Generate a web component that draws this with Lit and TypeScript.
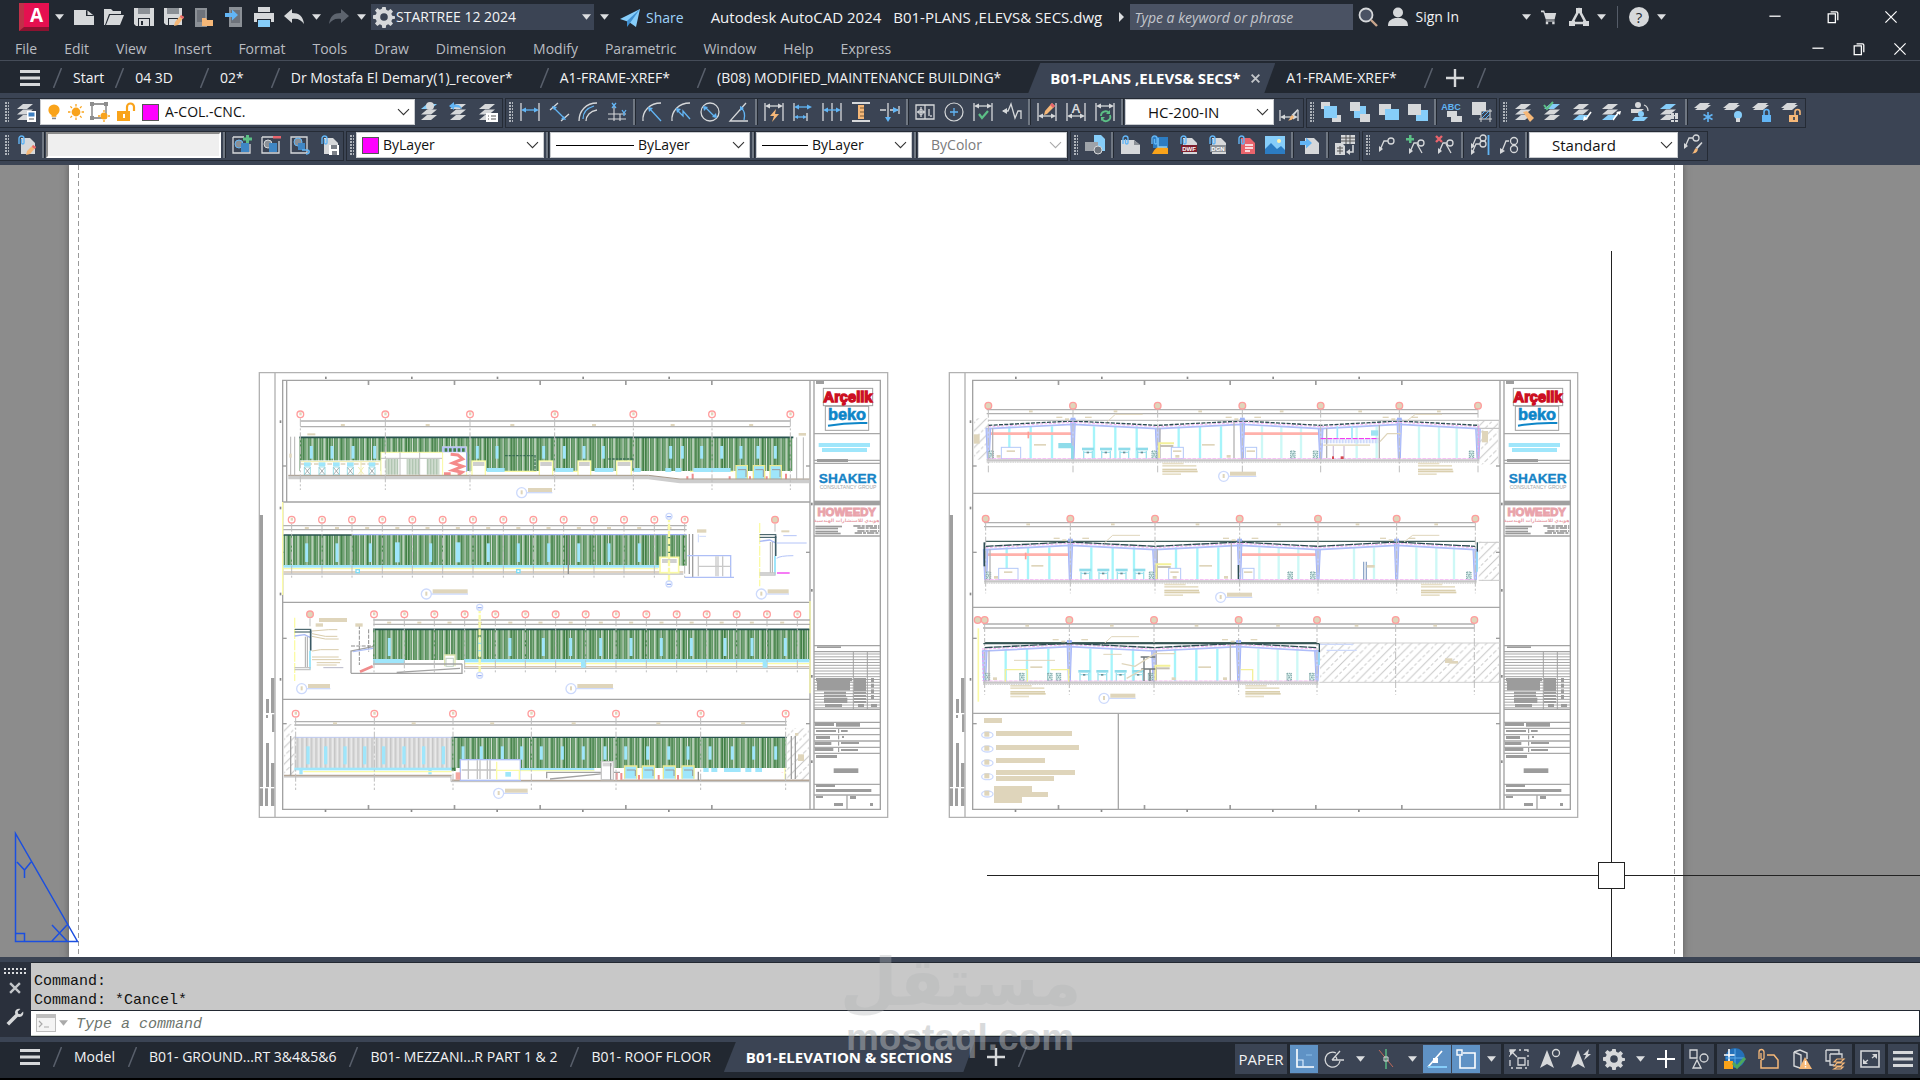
import { LitElement, html, css, svg } from "lit";
import { customElement } from "lit/decorators.js";

/* ---------- palette for icon strokes ---------- */
const G = "#d6d8da";
const B = "#62b5f5";
const LB = "#86cdf9";
const GR = "#5cbf86";
const OR = "#f9a31a";
const PE = "#f6b878";
const RD = "#e8646c";

/* ---------- icon primitives (20 x 20 box) ---------- */
const f = (d: string, c = G) => svg`<path d=${d} fill=${c}></path>`;
const s = (d: string, c = G, w = 1.3) => svg`<path d=${d} fill="none" stroke=${c} stroke-width=${w}></path>`;
const layer = (x: number, y: number, c = G) => f(`M${x + 6} ${y}h10l-6 5h-10z`, c);
const stack = (a = G, b = G, c = G) => [layer(1, 13, c), layer(1, 7.5, b), layer(1, 2, a)];
const page = (c = G) => f("M5 3h9l5 5v11H5z", c);
const clip = s("M3 9V3.500a2 2 0 0 1 5 0V8a1.300 1.300 0 0 1-2.500 0V4", B, 1.4);
const brush = [f("M18.500 7l1 1-5 6-2-1z", G), f("M13 13l2 1.500c-1 3-3 4-6 4 2-1 2-4 4-5.500z", PE)];
const posts = s("M1 1v18M19 1v18");
const arrowsH = (y: number, c = B) => [s(`M3 ${y}h14`, c), f(`M1 ${y}l5-2.500v5zM19 ${y}l-5-2.500v5z`, c)];
const leader = (x: number, y: number) => [s(`M${x} ${y + 12}l4-9h4`), f(`M${x - 1} ${y + 14}l0-6 4 3z`), svg`<circle cx=${x + 11} cy=${y + 3} r="3" fill="none" stroke=${G} stroke-width="1.300"></circle>`];
const docBadge = (c: string, t: string) => [page(G), f("M3 10h16v7H3z", c), svg`<text x="11" y="16" font-size="6" font-weight="700" text-anchor="middle" fill="#fff" font-family="Liberation Sans, sans-serif">${t}</text>`, clip];

const ICONS: Record<string, unknown> = {
  menu: f("M0 2h20v3H0zM0 8.500h20v3H0zM0 15h20v3H0z"),
  plus: f("M8.800 1h2.400v7.800H19v2.400h-7.800V19H8.800v-7.800H1V8.800h7.800z"),
  close: s("M3 3l14 14M17 3L3 17", "#c3c6ca", 3.4),
  new: [f("M0 3h12l8 6v9H0z"), f("M12 3v6h8z", "#222831"), f("M13.500 3.500l5.500 4.500h-5.500z")],
  open: [f("M0 2h7l2 2h8v3H5L1 18H0z"), f("M6 8h14l-4 10H2z")],
  save: [f("M0 1h20v18H2l-2-2z"), f("M4 1h12v6H4z", "#8b9096"), f("M4 11h12v8H4z", "#222831"), f("M5 12h10v7H5z"), f("M7 14h2v4H7z", "#222831")],
  saveas: [f("M0 1h18v17H2l-2-2z"), f("M3 1h12v6H3z", "#8b9096"), f("M4 11h10v7H4z", "#222831"), f("M5 12h8v6H5z"), f("M17 8l3 2-6 8-4 1 1-4z", PE), f("M17 8l3 2-1 2-3-2z", RD)],
  openweb: [f("M1 1h12v19H1z", "#8b9096"), f("M3 3h8v12H3z", "#6e737b"), f("M8 11h4l1 2h6v6H8z", PE)],
  saveweb: [f("M5 0h13v20H5z", "#8b9096"), f("M7 3h9v13H7z", "#6e737b"), f("M1 6h7V2.500l6 5.500-6 5.500V10H1z", B)],
  print: [f("M4 0h12v5H4z"), f("M0 6h20v9H0z"), f("M3 12h14v8H3z", "#222831"), f("M4 13h12v7H4z", LB)],
  undo: f("M0 9l8-7v4c7 0 11 3 12 11-3-4-6-6-12-5v4z"),
  redo: f("M20 9l-8-7v4C5 6 1 9 0 17c3-4 6-6 12-5v4z", "#5d646e"),
  gear: [f("M8.300 0h3.400l.5 2.800 2 .9L16.600 2 19 4.400l-1.700 2.400.9 2 2.800.5v2.400l-2.800.5-.9 2 1.700 2.400-2.400 2.400-2.400-1.700-2 .9-.5 2.800H8.300l-.5-2.800-2-.9L3.400 19 1 16.600l1.700-2.400-.9-2L-1 11.700V8.300l2.800-.5.9-2L1 3.400 3.400 1l2.400 1.700 2-.9z"), svg`<circle cx="10" cy="10" r="3.800" fill="#3b4454"></circle>`],
  share: [f("M0 11L20 1l-4 18-7-5z", LB), f("M20 1L7 13v6l3-4z", "#3f8fd0")],
  search: [svg`<circle cx="8" cy="8" r="6.500" fill="#4a5263" stroke=${G} stroke-width="1.800"></circle>`, s("M13 13l6 6", "#c9a68c", 2.4)],
  user: [svg`<circle cx="10" cy="5.500" r="5" fill=${G}></circle>`, f("M0 19c0-6 4-7 7-8h6c3 1 7 2 7 8z")],
  cart: [f("M0 2h4l1 3h14l-2 8H6L3 4H0z"), s("M6 15h11"), f("M6 16h3v3H6zM14 16h3v3h-3z")],
  apps: [s("M10 3L3 16h14z", G, 2.6), f("M7 1h6v5H7zM0 14h6v5H0zM14 14h6v5h-6z")],
  help: [svg`<circle cx="10" cy="10" r="10" fill=${G}></circle>`, svg`<text x="10" y="15.500" font-size="15" text-anchor="middle" fill="#222831" font-family="Open Sans, sans-serif">?</text>`],
  min: s("M3 9h14", "#fff", 1.6),
  restore: s("M4 6h9v11H4zM7 3.500h7.500q1.500 0 1.500 1.500v9", "#fff", 1.6),
  x: s("M3 3l14 14M17 3L3 17", "#fff", 1.5),
  props: [...stack(), f("M11 9h9v11h-9z", "#fff"), f("M12.500 10.500h6v4h-6z", "#3c7ec0"), s("M13 17h5", "#555", 1)],
  bulb: [svg`<circle cx="10" cy="7.500" r="7" fill=${OR}></circle>`, f("M7 13h6v3H7z", OR), f("M7.500 17h5v2h-5z", "#8a8a8a")],
  sun: [svg`<circle cx="10" cy="10" r="5.500" fill=${OR}></circle>`, s("M10 0v3M10 17v3M0 10h3M17 10h3M3 3l2 2M15 15l2 2M17 3l-2 2M5 15l-2 2", OR, 1.6)],
  vpfreeze: [s("M2 2h14v14H2z", "#777"), f("M0 0h4v4H0zM14 0h4v4h-4zM0 14h4v4H0z", "#8d8d8d"), svg`<circle cx="14" cy="14" r="3.500" fill=${OR}></circle>`, s("M14 8v2M14 18v2M8 14h2M18 14h2", OR)],
  unlock: [f("M1 9h13v10H1z", OR), s("M11 9V5a3.500 3.500 0 0 1 7 0v4", OR, 2.2), f("M7 12h2v4H7z", "#fff")],
  laycur: [...stack(LB), svg`<circle cx="10" cy="4" r="4" fill=${G}></circle>`],
  layprev: [...stack(), f("M0 4l5-4v2.500c5 0 7 1 8 5-2-2-4-2.500-8-2V8z", B)],
  laystate: [...stack(), f("M8 11h12v9H8z", "#fff"), s("M10 14h1M13 14h5M10 17h1M13 17h5", "#555", 1)],
  dlinear: [posts, arrowsH(8)],
  daligned: [s("M1 8l8-7M12 19l8-7"), s("M5 6l10 10", B), f("M3 4l5 1-3 3zM17 18l-5-1 3-3z", B)],
  darc: [s("M1 19C1 9 8 1 19 1M8 19c0-5 4-10 11-11"), s("M5 17C5 11 9 6 16 4", B)],
  dord: [s("M7 2v17M1 12h18M1 17h18M13 12v7", G, 1.1), s("M5 1l4 5M9 1L5 6M15 8l2 3 2-3M17 11v3", B)],
  drad: [s("M1 19C0 9 8 1 19 1"), s("M8 7l11 12", B), f("M6 5l5 1-4 4z", B)],
  djog: [s("M1 19C0 9 8 1 19 1"), s("M6 8l6 6v-5l7 8", B), f("M5 6l5 1-4 4z", B)],
  ddia: [svg`<circle cx="10" cy="10" r="9" fill="none" stroke=${G} stroke-width="1.300"></circle>`, s("M5 5l10 10", B), f("M3 4l5 1-4 4zM17 16l-5-1 4-4z", B)],
  dang: [s("M17 1L1 19h18"), s("M12 6c4 3 4 8 3 12", B), f("M11 4l4 2-4 3z", B)],
  dquick: [posts, arrowsH(4, G), f("M12 7l-6 7h4l-2 6 7-8h-4z", PE)],
  dbase: [s("M1 1v18"), arrowsH(5), s("M3 15h9", B), f("M1 15l4-2v4zM14 15l-4-2v4z", B), s("M14 11v8")],
  dcont: [s("M1 1v18M10 1v18M19 1v18"), arrowsH(8)],
  dspace: [s("M1 1h18M1 19h18", G, 2), f("M7 3h6v14H7z", PE), s("M9 6h4M9 10h4M9 14h4", "#7b5b35", 1)],
  dbreak: [s("M8 1v17M0 8h6M10 8h8M19 4v8"), f("M19 8l-6-3v6zM8 20l-3-5h6z", B)],
  dtol: [s("M1 3h18v14H1zM10 3v14"), s("M6 5v10M2 10h8", G), svg`<circle cx="6" cy="10" r="2.500" fill="none" stroke=${G}></circle>`, s("M14 7v7M16 13v2", G)],
  dcenter: [svg`<circle cx="10" cy="10" r="9" fill="none" stroke=${G} stroke-width="1.200"></circle>`, s("M10 6v8M6 10h8", B)],
  dinspect: [posts, arrowsH(4, G), s("M6 12l3 4 6-7", GR, 2.2)],
  djogline: [s("M1 9h5l3-7 4 14 3-7h3v8"), f("M0 9l5-3v6z")],
  dedit: [posts, arrowsH(14, G), f("M15 1l3 3-8 8-3 1 1-4z", PE), f("M15 1l3 3-2 2-3-3z", RD)],
  dtedit: [posts, arrowsH(14, G), svg`<text x="10" y="11" font-size="13" font-weight="700" text-anchor="middle" fill=${G} font-family="Liberation Sans, sans-serif">A</text>`],
  dupdate: [posts, arrowsH(4, G), s("M6 14a4.500 4.500 0 0 1 8-3M15 13a4.500 4.500 0 0 1-8 4", GR, 1.8), f("M15 8v4h-4zM6 19v-4h4z", GR)],
  dstyle: [s("M1 8v11M19 8v11"), arrowsH(15, G), brush],
  front: [f("M0 0h9v7H0zM11 13h9v7h-9z"), f("M3 4h13v12H3z", LB)],
  back: [f("M4 4h12v12H4z", LB), f("M0 0h10v9H0zM10 12h10v8H10z")],
  above: [f("M0 2h12v11H0z"), f("M6 7h14v11H6z", LB)],
  under: [f("M8 8h12v11H8z", LB), f("M0 2h13v11H0z")],
  abc: [svg`<text x="8" y="8" font-size="9" font-weight="700" text-anchor="middle" fill=${B} font-family="Liberation Sans, sans-serif">ABC</text>`, f("M4 9h10v5h5v6H8v-5H4z")],
  hatchback: [f("M0 0h14v13H0z"), f("M9 9h9v9H9z", "#3b4454"), s("M7 9h13M7 17h13M9 7v13M18 7v13", G, 1), s("M10 16l7-7M10 12l3-3M13 17l5-5", B, 1)],
  laymatch: [...stack(), f("M9 10l4-1 7 7-4 4z", PE)],
  laycheck: [...stack(LB), s("M1 3l3 4 6-7", GR, 2)],
  laydown: [...stack(G, G, LB), s("M19 10l-5 7", "#fff", 1.6), f("M11 19l1-5 4 3z", "#fff")],
  layup: [...stack(G, G, LB), s("M12 18l5-7", "#fff", 1.6), f("M20 9l-5 1 4 3z", "#fff")],
  laywalk: [svg`<circle cx="8" cy="3" r="3" fill=${G}></circle>`, f("M1 7h13l-5 4H1z"), svg`<circle cx="11" cy="12" r="3" fill=${LB}></circle>`, f("M5 15h13l-4 4H2z", LB), s("M14 3c3 1 4 3 4 6", G)],
  layiso: [...stack(LB, G, G), f("M12 11h3v6h-3zM16 11h3v6h-3zM12 18h3v2h-3zM16 18h3v2h-3z")],
  layfreeze: [layer(0, 1), layer(1, 3), s("M14 10v10M9.500 12.500l9 5M18.500 12.500l-9 5", B, 1.6)],
  layoff: [layer(0, 1), layer(1, 3), svg`<circle cx="15" cy="13" r="4" fill=${LB}></circle>`, f("M13 16h4v4h-4z")],
  laylock: [layer(0, 1), layer(1, 3), f("M10 13h9v7h-9z", B), s("M12 13v-3a2.500 2.500 0 0 1 5 0v3", B, 1.6)],
  layunlock: [layer(0, 1), layer(1, 3), f("M8 13h9v7H8z", PE), s("M14 13v-3a2.500 2.500 0 0 1 5 0v3", PE, 1.6), f("M12 15h2v3h-2z", "#555")],
  xedit: [page(), clip, f("M17 10l3 2-6 7-4 1 1-4z", PE), f("M17 10l3 2-1 2-3-2z", RD)],
  wsadd: [s("M1 2h11M1 2v16h17V9"), svg`<circle cx="7" cy="9" r="4" fill="#8b9096" stroke=${B}></circle>`, f("M9 8h8v9H9z", "#3f86c4"), f("M14 0h3v2.500h3v3h-3V8h-3V5.500h-3v-3h3z", GR)],
  wsdel: [s("M1 2h11M1 2v16h17V6"), svg`<circle cx="7" cy="9" r="4" fill="#8b9096" stroke=${G}></circle>`, f("M8 8h8v9H8z", "#3f86c4"), f("M12 1h8v2.500h-8z", RD)],
  wsdisc: [s("M1 2h16v16H1z"), svg`<circle cx="8" cy="7" r="4" fill="#8b9096" stroke=${B}></circle>`, f("M8 8h7v7H8z", "#3f86c4"), s("M12 15h5c3 0 3 4-1 4", B, 1.6)],
  wssave: [page(), clip, f("M10 10h10v10H10z", "#fff"), f("M12 10h6v4h-6zM13 16h5v4h-5z", "#7b8088")],
  insert: [f("M9 0h7l4 4v12H9z", LB), f("M0 7h13v9H0z", "#9ea3a9"), svg`<circle cx="13" cy="15" r="4" fill="#6e747c" stroke=${G}></circle>`],
  attach: [f("M1 5h13l6 5v9H1z"), f("M14 5v5h6z", "#8b9096"), clip],
  xclip: [f("M4 2h15v11H4z", "#2c7cc2"), f("M3 19c4-9 9-8 16-6v6z", OR), s("M9 3v9h9", LB), clip],
  dwf: docBadge("#7e1f2d", "DWF"),
  dgn: docBadge("#8b9096", "DGN"),
  pdf: [page(RD), s("M9 10h8M9 13h8M9 16h5", "#fff", 1.4), clip],
  image: [f("M0 1h20v18H0z", LB), svg`<circle cx="14" cy="6" r="2" fill="#fff2b0"></circle>`, f("M0 19V14l6-6 6 6 4-3 4 4v4z", "#2c7cc2")],
  import: [page(), f("M0 6h6V2.500L12 8l-6 5.500V10H0z", B)],
  datalink: [f("M6 0h14v9H6z"), s("M6 3h14M6 6h14M11 0v9M15 0v9", "#555", 1), f("M0 8h7l3 3v9H0z"), s("M2 13h6M2 16h6M5 11v8", "#555", 1), s("M18 10v7h-5", G, 1.6), f("M11 17l4-3v6z")],
  mleader: leader(3, 3),
  mladd: [leader(4, 5), s("M11 9l5 9"), f("M3 0h2.500v3H8v2.500H5.500V8H3V5.500H0V3h3z", GR)],
  mldel: [leader(4, 5), s("M11 9l5 9"), s("M1 1l6 6M7 1L1 7", RD, 2.4)],
  mlalign: [leader(2, 0), leader(2, 6), s("M18.500 0v20", B, 1.8)],
  mlcollect: [s("M3 16L7 6h3"), f("M1 19l0-6 5 3z"), svg`<circle cx="15" cy="6" r="3.500" fill="none" stroke=${G} stroke-width="1.300"></circle><circle cx="15" cy="14" r="3.500" fill="none" stroke=${G} stroke-width="1.300"></circle>`],
  mlstyle: [leader(2, 0), brush],
  wrench: [s("M2 18L12 8", G, 4), f("M10 5c0-3 3-5 6-4l-3 3 .5 2.500 2.500.5 3-3c1 3-1 6-4 6-3 0-5-2-5-5z")],
  prompt: [f("M0 1h20v18H0z", "#bdbdbd"), f("M1 5h18v13H1z", "#f4f4f4"), s("M3 8l3 3-3 3M8 14h5", "#aaa", 1.2)],
  ortho: [s("M3 0v18h17", "#fff", 1.6), s("M3 11h6v7", "#d9ecff", 1.2), s("M12 6h6", "#8ebfe9", 1)],
  polar: [s("M16 12a7.500 7.500 0 1 1-4-8"), s("M8 11h12M8 11l8-9M13 11a5 5 0 0 0-2-4")],
  iso: [s("M3 1l14 17", "#c06a5a", 1), s("M10 0v20", GR, 1.4), s("M8 8h4v4H8z", G, 1)],
  otrack: [s("M1 18L15 2", "#fff", 1.6), s("M1 18h19", LB, 2), f("M6 9h5v5H6z", "#fff")],
  osnap: [s("M4 7v12h15V4H7", "#fff", 1.6), s("M1 1h5v5H1z", "#fff", 1.4)],
  annomon: [svg`<path d="M1 1h18v18H1z" fill="none" stroke=${G} stroke-width="1.300" stroke-dasharray="6 3 2 3"></path>`, f("M1 1h8v8H1z", "#3b4454"), s("M9 9h7v7H9z"), s("M3 3l5 5"), f("M1 1h6l-6 6z")],
  annovis: [f("M7 1L0 19l7-4 7 4z"), svg`<circle cx="16" cy="4" r="3.500" fill="none" stroke=${G} stroke-width="1.300"></circle>`],
  annoauto: [f("M7 1L0 19l7-4 7 4z"), f("M18 0l-6 6h3l-2 5 7-6h-3z")],
  cross: f("M9 1h2v8h8v2h-8v8H9v-8H1V9h8z", "#fff"),
  shapes: [s("M1 1h7v8H1zM4 19l4-8 4 8z"), svg`<circle cx="15" cy="9" r="4" fill="none" stroke=${G} stroke-width="1.300"></circle>`],
  hwaccel: [svg`<circle cx="11" cy="9" r="10" fill="#2470b8"></circle>`, s("M5 0v12M0 6h11", "#fff", 1.6), s("M11 0v18M2 9h18", "#5aa9e8", 1), f("M0 12h9v8H0z", OR), s("M9 14l4 4 8-9", "#4da75e", 3)],
  xref: [s("M9 6h7l4 5v8H3v-8", PE, 1.5), s("M1 10V3a2.500 2.500 0 0 1 5 0v6a1.500 1.500 0 0 1-3 0V4", PE)],
  notify: [s("M2 3l6-2 7 3v6M2 3v14l6 2M2 3l7 3v12", G, 1.4), f("M13 8l7 12H7z", PE), f("M12.800 12h1.400v4h-1.400zM12.800 17h1.400v1.500h-1.400z", "#fff")],
  isolate: [s("M0 1h13v4M0 1v11h4M4 5h12v4M4 5v11h4"), s("M11 10h7l-3 3H8zM11 14h7l-3 3H8zM11 18h6l-2 2H8z", PE, 1.2)],
  clean: [s("M1 2h18v16H1z", G, 1.6), f("M12 5h5v5zM8 15H3v-5z"), s("M16 6l-4 3M4 14l4-3")],
};

const icon = (name: string, cls = "ic") =>
  html`<svg class=${cls} viewBox="0 0 20 20" aria-hidden="true">${ICONS[name]}</svg>`;
const arrow = html`<svg class="arrow" viewBox="0 0 8 5" aria-hidden="true"><path d="M0 0h8L4 5z" fill="currentColor"></path></svg>`;
const chevron = html`<svg class="chev" viewBox="0 0 10 6" aria-hidden="true"><path d="M0 0l5 5 5-5" fill="none" stroke="currentColor"></path></svg>`;

/* ---------- drawing sheets: 3 units per pixel ---------- */
const GY = "#a9a9a9";
const TAN = "#dfd5bb";
const CY = "#9fe6fb";
const PB = "#cddafc";
const YL = "#fbfba6";
const PK = "#ff9d9d";
const R = (x: number, y: number, w: number, h: number, c: string) => svg`<rect x=${x} y=${y} width=${w} height=${h} fill=${c}></rect>`;
const O = (x: number, y: number, w: number, h: number, c: string, sw = 3) => svg`<rect x=${x} y=${y} width=${w} height=${h} fill="#fff" stroke=${c} stroke-width=${sw}></rect>`;
const P = (d: string, c = GY, w = 3, dash = "") => svg`<path d=${d} fill="none" stroke=${c} stroke-width=${w} stroke-dasharray=${dash}></path>`;
const range = (n: number) => Array.from({ length: n }, (_, i) => i);

const bubble = (x: number, y: number, full = false) => svg`
  <circle cx=${x} cy=${y} r="10" fill=${full ? TAN : "#fff"} stroke=${PK} stroke-width="4"></circle>
  ${R(x - 3, y - 6, 7, 9, TAN)}`;
const grid = (xs: number[], y: number, end: number, full = false) => xs.map((x) => svg`
  ${P(`M${x} ${y + 12}V${end}`, "#bdbdbd", 3, "24 6 6 6")}${bubble(x, y, full)}`);
const dims = (x1: number, x2: number, ya: number, yb: number, marks: number[] = []) => svg`
  ${P(`M${x1} ${ya}H${x2}M${x1} ${yb}H${x2}`, "#b0b0b0", 4)}${marks.map((x) => R(x - 6, yb - 8, 12, 6, TAN))}`;
const title = (x: number, y: number, w: number) => svg`
  <circle cx=${x} cy=${y} r="15" fill="#fff" stroke=${PB} stroke-width="4"></circle>
  ${R(x - 3, y - 7, 6, 12, TAN)}${P(`M${x + 15} ${y}H${x + 20 + w}`, PB, 4)}${R(x + 19, y - 14, w, 12, TAN)}`;
const marker = (x: number, y1: number, y2: number) => svg`
  ${P(`M${x} ${y1}V${y2}`, YL, 7, "18 4")}
  ${[y1, y2].map((y) => svg`<circle cx=${x} cy=${y} r="9" fill="#fff" stroke=${PB} stroke-width="4"></circle>${R(x - 6, y - 1, 12, 4, "#9ab0f0")}`)}`;
const siding = (x: number, y: number, w: number, h: number, id = "siding") => R(x, y, w, h, `url(#${id})`);
const windows = (xs: number[], y: number, h: number, w = 9) => xs.map((x) => R(x - w / 2, y, w, h, CY));
const mids = (xs: number[]) => xs.slice(1).map((x, i) => (x + xs[i]) / 2);
const dock = (x: number, y: number, w: number, h: number) => svg`${O(x, y, w, h, YL, 4)}${R(x + 3, y + 3, w - 6, 12, "#cfcfcf")}`;
const gate = (x: number, y: number, w: number, h: number) => svg`${R(x, y, w, h, CY)}${P(`M${x} ${y + h}V${y}H${x + w}V${y + h}`, "#ece98f", 4)}${P(`M${x + 6} ${y + 12}H${x + w - 4}V${y + h - 8}`, "#9a9a9a", 3)}`;
const hatch = (x: number, y: number, w: number, h: number) => R(x, y, w, h, "url(#hatch)");

const sideDetail = (x: number, y: number) => svg`
  ${P(`M${x} ${y - 35}V${y + 155}`, YL, 4, "30 4")}
  ${P(`M${x} ${y}h50M${x} ${y + 8}h50`, "#2c4c55", 3)}${P(`M${x} ${y + 20}l30-4 16 8`, "#a9b9f5", 4)}
  ${P(`M${x + 48} ${y + 2}V${y + 64}`, "#3b5a66", 5)}${P(`M${x + 46} ${y + 64}V${y + 120}`, CY, 6)}
  ${P(`M${x + 32} ${y + 22}V${y + 115}M${x + 38} ${y + 22}V${y + 115}`, "#a9a9a9", 3)}
  ${P(`M${x} ${y + 115}h48M${x} ${y + 121}h48`, "#c4c4c4", 4)}`;

const frame = () => svg`
  ${P("M28 23H1913V1357H28zM75 23V1357", "#b2b2b2", 4)}
  ${P("M98 46H1891V1333H98zM1680 46V1333M1692 46V1333", "#a2a2a2", 4)}
  ${[355, 613, 870, 1127, 1385].map((x) => svg`${R(x - 2, 46, 5, 14, "#9c9c9c")}${R(x - 2, 1320, 5, 14, "#9c9c9c")}${R(x - 130, 35, 5, 7, "#8a8a8a")}${R(x - 131, 1334, 5, 7, "#8a8a8a")}`)}
  ${[303, 562, 820, 1076].map((y) => svg`${R(98, y - 2, 12, 4, "#9c9c9c")}${R(1668, y - 2, 12, 4, "#9c9c9c")}${R(89, y - 137, 5, 8, "#8a8a8a")}${R(1683, y + 110, 5, 8, "#8a8a8a")}`)}
  ${R(29, 450, 10, 816, "#9f9f9f")}${R(29, 1270, 10, 53, "#9f9f9f")}
  ${R(63, 939, 10, 105, "#9f9f9f")}${R(48, 1002, 9, 42, "#9f9f9f")}${R(48, 1050, 6, 9, "#9f9f9f")}${R(66, 1048, 7, 53, "#9f9f9f")}
  ${R(48, 1134, 9, 132, "#9f9f9f")}${R(63, 1194, 10, 72, "#9f9f9f")}${R(45, 1270, 9, 53, "#9f9f9f")}${R(63, 1270, 10, 53, "#9f9f9f")}

  ${R(1698, 48, 24, 9, "#9f9f9f")}
  ${O(1720, 70, 148, 52, "#a0a0a0")}${O(1726, 124, 130, 72, "#a0a0a0")}
  <text class="lg red" x="1794" y="112">Arçelik</text>
  <text class="lg beko" x="1791" y="165">beko</text>
  ${P("M1734 182Q1790 172 1852 174", "#0e86c8", 6)}
  ${P("M1692 206H1891M1692 286H1891M1692 295H1891", "#a8a8a8", 4)}
  ${R(1706, 234, 154, 12, CY)}${R(1716, 249, 135, 12, CY)}${R(1701, 282, 93, 9, "#9c9c9c")}
  <text class="lg shaker" x="1793" y="355">SHAKER</text>
  <text class="lg sub" x="1794" y="371">CONSULTANCY GROUP</text>
  ${R(1692, 407, 199, 14, "#a0a0a0")}
  <text class="lg how" x="1790" y="452">HOWEEDY</text>
  <text class="lg ar" x="1790" y="472">هويدي للاستشارات الهندسية</text>
  ${[[482, 80], [488, 68], [497, 68], [503, 76]].map(([y, w]) => svg`${R(1696, y, w, 5, "#9a9a9a")}${P(`M${1890 - w} ${y + 1}H1888`, "#8f8f8f", 4, "22 3 9 3")}`)}
  ${P("M1692 513H1891M1692 842H1891M1692 860H1891M1692 1033H1891M1692 1072H1891", "#a2a2a2", 4)}
  ${R(1701, 844, 72, 5, "#9c9c9c")}
  ${range(20).map((i) => P(`M1692 ${867 + i * 8.500}H1891`, "#a8a8a8", 3))}
  ${P("M1810 860V1033M1852 860V1033", "#a2a2a2", 3)}
  ${R(1698, 939, 108, 10, "#9c9c9c")}${R(1701, 948, 99, 28, "#9c9c9c")}${R(1722, 980, 66, 7, "#9c9c9c")}${R(1722, 989, 66, 7, "#9c9c9c")}${R(1722, 998, 70, 16, "#9c9c9c")}${R(1725, 1017, 51, 9, "#9c9c9c")}
  ${R(1812, 939, 36, 40, "#9c9c9c")}${[981, 990, 999, 1008].map((y) => R(1812, y, 36, 6, "#9c9c9c"))}${R(1824, 1017, 18, 9, "#9c9c9c")}${[939, 956, 973, 990].map((y) => R(1863, y, 9, 12, "#9c9c9c"))}${R(1863, 1017, 18, 9, "#9c9c9c")}
  ${P("M1692 1090H1891M1692 1109H1891M1692 1128H1891M1692 1147H1891M1692 1165H1891M1692 1258H1891M1692 1290H1891M1791 1290V1333", "#a8a8a8", 4)}
  ${R(1694, 1074, 58, 9, "#9c9c9c")}${R(1758, 1074, 72, 11, "#9c9c9c")}${R(1698, 1095, 60, 6, "#9c9c9c")}${R(1773, 1095, 20, 6, "#9c9c9c")}
  ${R(1698, 1113, 42, 9, "#9c9c9c")}${R(1776, 1113, 6, 6, "#9c9c9c")}${R(1694, 1131, 50, 9, "#9c9c9c")}${R(1773, 1131, 54, 6, "#9c9c9c")}
  ${R(1694, 1149, 56, 9, "#9c9c9c")}${R(1773, 1152, 51, 6, "#9c9c9c")}${P("M1766 1092v12M1766 1111v12M1766 1130v12M1766 1149v12", "#8f8f8f", 3)}
  ${R(1698, 1170, 63, 9, "#9c9c9c")}${R(1751, 1210, 74, 14, "#9c9c9c")}
  ${R(1698, 1258, 57, 8, "#9c9c9c")}${R(1698, 1272, 166, 9, "#9c9c9c")}${R(1698, 1293, 21, 6, "#9c9c9c")}${R(1800, 1293, 18, 9, "#9c9c9c")}
  ${R(1752, 1314, 27, 9, "#9c9c9c")}${R(1860, 1314, 9, 9, "#9c9c9c")}`;

const R1 = [151, 406, 660, 914, 1150, 1386, 1621];
const R2 = [125, 216, 306, 397, 487, 578, 669, 760, 850, 941, 1032, 1122, 1213, 1304];
const R3 = [372, 463, 553, 644, 736, 826, 917, 1007, 1098, 1189, 1280, 1370, 1460, 1551, 1642];
const R4 = [137, 373, 609, 844, 1098, 1352, 1607];

const elevations = () => svg`
  ${frame()}
  ${P("M98 411H1680M98 712H1680M98 1003H1680M110 46V411", "#a4a4a4", 4)}
  ${P("M98 411V690M1680 708V985", YL, 4)}

  ${dims(151, 1621, 168, 185, mids(R1))}
  ${siding(148, 217, 1480, 101)}${P("M148 217H1630", "#2a5450", 5)}
  ${windows([184, 246, 309, 374, 682, 741, 881, 943, 1002, 1060, 1262, 1297, 1355, 1415, 1473, 1524, 1576], 243, 38)}
  ${R(150, 286, 242, 46, "#fff")}${P("M152 297H390", "#e4dccb", 6, "14 6")}
  ${[172, 216, 259, 301, 366].map((x) => svg`${R(x - 10, 292, 20, 12, CY)}${P(`M${x - 9} 306v24h18v-24z`, "#9adfe8", 3)}${P(`M${x - 8} 308l16 20M${x + 8} 308l-16 20`, "#7f8a8c", 2)}`)}
  ${P("M333 290v40M325 306l16 22M341 306l-16 22M152 290H390", "#f1eeb0", 3)}
  ${O(393, 262, 185, 70, YL)}${P("M450 262v68M509 262v68M393 280H600", "#bdbdbd", 3)}
  ${[407, 470, 530].map((x) => siding(x, 282, 38, 47, "pale"))}
  ${O(578, 246, 72, 85, YL)}${R(576, 244, 74, 18, "#b5c2f5")}${P("M584 255H648", "#3f7f45", 10, "8 5")}
  ${P("M602 268l22 2 14 12-30 12 30 10-30 12 28 6-12 8M582 326h20", "#f58b8b", 9)}${P("M650 262v58", "#9fb1f3", 4)}
  ${R(652, 318, 976, 14, "#fff")}${P("M712 319H860M915 319H985M1320 319H1450", YL, 4)}
  ${[[710, 54], [916, 54], [1034, 56], [1152, 20], [1246, 18], [1276, 18], [1330, 112]].map(([x, w]) => R(x, 309, w, 12, CY))}
  ${dock(666, 288, 40, 44)}${dock(868, 288, 40, 44)}${dock(984, 288, 38, 44)}${dock(1100, 288, 44, 44)}
  ${P("M1075 282H1150M765 272H855V318", "#3c6f56", 4, "8 3")}
  ${gate(1458, 302, 34, 42)}${gate(1510, 302, 34, 42)}${gate(1560, 302, 34, 42)}
  ${P("M1312 334v10M1328 326v18M1439 334v10M1500 334v10M1550 334v10M1608 326v18", "#f08c8c", 6)}
  ${P("M115 337H1195L1290 349H1678", "#cdcdcd", 12)}${P("M115 331H1195L1290 342H1678", "#a79a8c", 3)}
  ${P("M122 215V331M134 215V331M1640 217V345M1660 217V345", "#b5b5b5", 3)}
  ${R(118, 266, 7, 12, TAN)}${R(172, 205, 24, 6, TAN)}${R(1646, 204, 22, 8, TAN)}
  ${grid(R1, 148, 375)}${title(815, 383, 72)}

  ${dims(100, 1310, 482, 494, mids(R2))}
  ${siding(101, 510, 1209, 92)}${P("M101 510H306", "#2a5450", 5)}${P("M306 509H1310", "#9fb1f3", 4)}
  ${windows([170, 261, 361, 542, 715, 805, 896, 986, 1077, 1168], 535, 56)}${windows([442, 624], 532, 60, 14)}
  ${R(101, 600, 1130, 8, CY)}${P("M101 611H1225", YL, 4)}${P("M101 621H1300", "#d6c4ae", 5)}${P("M101 627H1300", "#c2c2c2", 4)}
  ${[[316, 612], [798, 612]].map(([x, y]) => svg`${R(x, y, 14, 13, "#7fdcf5")}${R(x + 4, y + 4, 6, 5, "#fff")}`)}
  ${P("M955 510V627", "#8d8d8d", 4)}${O(1230, 577, 56, 46, YL, 5)}${R(1236, 582, 44, 12, "#d0d0d0")}
  ${P("M1318 507V627M1328 507V636", "#9f9f9f", 4)}
  ${P("M1312 572H1442V637M1305 637H1452", "#aebff6", 4)}${P("M1345 574V634M1398 574V634M1404 574V634M1418 574V634M1345 604H1442", "#c9c9c9", 4)}
  ${R(1341, 493, 28, 10, TAN)}${P("M1345 508v24M1348 514h20", PB, 3)}
  ${grid(R2, 464, 642)}${marker(1257, 454, 657)}
  ${sideDetail(1529, 509)}${P("M1580 534h90M1600 512h40M1580 580q10-8 50-8", "#b4c4f8", 3)}${R(1594, 496, 24, 6, TAN)}${R(1581, 622, 38, 4, "#f23df0")}
  ${grid([1575], 464, 506, true)}
  ${title(529, 687, 105)}${title(1534, 687, 63)}

  ${dims(370, 1680, 765, 778, mids(R3))}
  ${siding(369, 793, 1309, 92)}${P("M369 793H1678", "#2a5450", 5)}
  ${windows([418, 689, 780, 880, 962, 1052, 1143, 1234, 1324, 1425, 1506, 1606], 819, 54)}
  ${R(369, 882, 95, 12, CY)}${R(464, 894, 178, 2, "#fff")}${R(642, 882, 1036, 10, CY)}${P("M642 896H1678", YL, 4)}${P("M642 905H1678", "#d6c4ae", 4)}${P("M642 910H1678", "#bdbdbd", 4)}
  ${R(584, 870, 31, 34, "#fff")}${P("M584 904V870H615V904", "#dfe6b0", 4)}${O(588, 880, 22, 24, "#c0d0c4")}
  ${P("M303 925H636V896M303 925V858L369 845M369 897H636M440 922l190-12", "#a2a2a2", 4)}${P("M330 920l38-16", "#f08c8c", 8)}
  ${P("M303 843H369M328 780V900M356 793V860", "#8d8d8d", 3, "12 4")}${P("M309 860l60-10", "#aebff6", 4)}
  ${R(316, 775, 22, 10, TAN)}${R(207, 759, 84, 12, TAN)}${R(197, 775, 22, 10, TAN)}
  ${sideDetail(134, 793)}
  ${P("M186 798l50-4h26M186 806l40 8h36M186 814l40 8h40M186 858l26-4h54M186 876h80M186 884h88M200 893h70M200 900h60", "#d8cbaa", 3)}${P("M220 908h60", "#b7b7c8", 3)}
  ${grid([180], 748, 790, true)}${grid(R3, 748, 925)}${marker(689, 727, 931)}
  ${[1000, 1545].map((x) => svg`${R(x - 7, 890, 14, 18, CY)}`)}
  ${title(155, 971, 66)}${title(963, 971, 107)}

  ${dims(133, 1610, 1070, 1080, mids(R4))}
  ${hatch(102, 1077, 32, 155)}${hatch(1612, 1090, 66, 155)}
  ${siding(133, 1117, 472, 92, "gray")}${siding(605, 1117, 1005, 92)}${P("M133 1117H605", "#bcc8ee", 3)}${P("M605 1117H1610", "#2a5450", 4)}
  ${windows([174, 227, 285, 344, 401, 462, 521, 580], 1144, 54, 10)}
  ${windows([639, 694, 757, 815, 874, 937, 1000, 1065, 1127, 1193, 1256, 1314, 1380, 1447, 1511, 1577], 1144, 40)}
  ${R(133, 1208, 472, 8, CY)}${R(148, 1214, 10, 14, CY)}${R(535, 1214, 10, 14, CY)}${P("M160 1220H605", YL, 4)}
  ${P("M102 1232H605", "#b5a697", 5)}${P("M605 1246H1678", "#b5a697", 5)}${P("M102 1236H603V1250H1678", "#bdbdbd", 3)}
  ${R(605, 1208, 12, 10, "#3d7c41")}
  ${O(631, 1184, 180, 62, "#aebff6", 4)}${P("M655 1186v56M682 1186v56M690 1186v56M712 1186v56M720 1186v56M635 1215H740", "#c3c3c3", 4)}
  ${P("M740 1190V1244M740 1216H808V1244", YL, 4)}${R(766, 1221, 17, 14, CY)}${R(617, 1222, 14, 22, "#f4a8a0")}
  ${R(811, 1209, 222, 8, CY)}${R(811, 1218, 300, 26, "#fff")}${P("M890 1240V1222H1110M900 1242L1060 1226", "#a2a2a2", 4)}${P("M811 1217H1033", YL, 3)}
  ${O(1054, 1190, 36, 54, "#c9c9c9", 4)}${R(1058, 1194, 28, 10, "#d6d6d6")}${P("M1082 1194V1244", "#8d8d8d", 3)}
  ${[1124, 1177, 1240, 1296].map((x) => gate(x, 1203, 36, 38))}
  ${P("M1100 1224v20M1114 1224v20M1167 1230v14M1226 1230v14M1284 1230v14M1566 1238l34-14", "#f08c8c", 6)}
  ${[[1360, 16], [1384, 18], [1422, 50], [1486, 18], [1516, 20]].map(([x, w]) => R(x, 1209, w, 12, CY))}
  ${R(1340, 1222, 270, 20, "#fff")}${P("M1345 1220V1246", "#8d8d8d", 4)}${P("M1605 1208V1242", YL, 4)}
  ${P("M1624 1113V1242M1636 1113V1242M122 1113V1232", "#9f9f9f", 4)}${R(1644, 1168, 18, 20, TAN)}${R(1635, 1104, 10, 8, TAN)}
  ${grid(R4, 1046, 1275)}${title(746, 1285, 68)}`;

/* A long section through the bays; dx and dy move it to its own strip. */
const section = (dx: number, yc: number, dy: number, o: { end: number; firm?: boolean; cranes?: boolean }) => {
  const xs = [145, 399, 653, 907, 1142, 1378, 1614].map((x) => x + dx);
  const used = xs.slice(0, o.end);
  const last = used[used.length - 1];
  const roof = (k: number) => used.map((x, i) => `${i ? "L" : "M"}${x} ${(i % 2 ? 168 : 181) + dy + k}`).join("");
  const cols = used.map((x, i) => svg`<path d=${`M${x - 7} ${(i % 2 ? 162 : 190) + dy}h14l-4 ${i % 2 ? 120 : 92}h-6z`} fill="#c0ccfb" stroke="#a3b4f8" stroke-width="3"></path>`);
  const vents = [208, 272, 336, 462, 526, 590, 716, 780, 843, 966, 1024, 1083, 1250, 1310, 1437, 1497, 1550].map((x) => x + dx).filter((x) => x < last - 20);
  const bench = (x: number) => svg`${R(x, 248 + dy, 36, 8, "#8fdcea")}${P(`M${x + 5} ${257 + dy}v24M${x + 31} ${257 + dy}v24M${x + 5} ${262 + dy}h26`, "#9fe3ee", 4)}${R(x + 14, 260 + dy, 7, 5, "#6d8d94")}`;
  const plant = (x: number) => svg`${R(x - 6, 258 + dy, 13, 22, "#dff3f2")}${P(`M${x - 6} ${258 + dy}h13v22h-13zl13 22M${x + 7} ${258 + dy}l-13 22`, "#7fa8a8", 3, "4 2")}`;
  const desk = (x: number, w: number) => svg`${O(x, 247 + dy, w, 34, "#b3c8f8")}${R(x + w / 2 - 13, 256 + dy, 25, 5, TAN)}`;
  const notes = (x: number) => [0, 7, 18, 24, 32].map((k, i) => R(x, 293 + dy + k, [64, 102, 104, 106, 56][i], 5, i === 2 || i === 3 ? "#dacfae" : "#e6dec6"));
  return svg`
    ${dims(dx + 140, dx + 1614, yc + 12, yc + 24)}
    ${mids(xs).map((x) => R(x - 5, yc + 14, 11, 6, TAN))}
    ${vents.map((x, i) => P(`M${x} ${184 + dy}V${281 + dy}`, i > 8 ? "#cdf8f6" : "#a6f4fa", 7))}
    ${o.cranes ? [[150, 395], [912, 1142]].map(([a, b]) => svg`${P(`M${a + dx} ${206 + dy}H${b + dx}`, "#ffb1ab", 8)}`) : ""}
    ${o.cranes ? P(`M${265 + dx} ${200 + dy}v20`, "#ff9c95", 5) : ""}
    ${cols}
    ${P(roof(10), "#aebdf9", 5)}${P(roof(4), "#f7b0f3", 3, "8 5")}${P(roof(0), "#2c4d53", 4, o.firm ? "24 3" : "12 4")}
    ${P(`M${145 + dx} ${166 + dy}H${last}`, o.firm ? "#45615f" : "#c2c2c2", 4)}
    ${used.map((x, i) => (i % 2 ? svg`${R(x - 7, 158 + dy, 14, 9, "#9eb3f8")}${R(x - 50, 155 + dy, 18, 4, TAN)}${R(x - 24, 160 + dy, 12, 5, TAN)}${R(x + 36, 155 + dy, 20, 4, TAN)}` : ""))}
    ${P(`M${500 + dx} ${172 + dy}l26-24h82`, TAN, 3)}
    ${o.end > 6 ? P(`M${1400 + dx} ${168 + dy}l26-20h80`, TAN, 3) : ""}
    ${[426, 480, 535, 588].map((x) => bench(x + dx))}
    ${[153, 642].map((x) => plant(x + dx))}${o.end > 5 ? [1058, 1126, 1594].map((x) => plant(x + dx)) : [256, 340, 366, 1058, 1126].map((x) => plant(x + dx))}
    ${o.cranes ? svg`${desk(184 + dx, 58)}${desk(694 + dx, 36)}${desk(916 + dx, 34)}` : ""}
    ${P(`M${158 + dx} ${190 + dy}v90M${882 + dx} ${170 + dy}v110M${660 + dx} ${190 + dy}v90`, "#b5b5b5", 4)}
    ${P(`M${657 + dx} ${280 + dy}V${235 + dy}H${702 + dx}`, "#f4f19a", 6)}${R(660 + dx, 240 + dy, 40, 6, "#c5c0b5")}
    ${R(282 + dx, 237 + dy, 36, 5, TAN)}${R(786 + dx, 237 + dy, 38, 5, TAN)}${R(170 + dx, 270 + dy, 12, 8, TAN)}${R(706 + dx, 270 + dy, 12, 8, TAN)}${R(860 + dx, 270 + dy, 12, 8, TAN)}
    ${P(`M${142 + dx} ${281 + dy}H${last}`, "#f4b6f3", 3, "12 3")}
    ${P(`M${140 + dx} ${286 + dy}H${last + 4}`, "#c6c6c6", 7)}${P(`M${140 + dx} ${291 + dy}H${last + 4}`, "#d4d4d4", 4, "5 2")}
    ${grid(xs, yc, 322 + dy, true)}
    ${o.end > 5 ? svg`${notes(667 + dx + (dx ? 14 : 0))}${notes(1434 + dx + (dx ? 17 : 0))}` : svg`${notes(211)}${notes(916)}`}`;
};

const sections = () => svg`
  ${frame()}
  ${P("M98 385H1680M98 727H1680M98 1045H1680M535 1045V1333", "#a8a8a8", 4)}
  ${hatch(102, 160, 42, 124)}${R(101, 208, 18, 28, TAN)}
  ${section(0, 122, 0, { end: 7, cranes: true })}
  ${P("M1142 221H1315", "#f23df0", 4, "16 3")}${P("M1142 229H1315", "#cdd9fb", 12, "6 3")}${P("M1160 190V280M1318 180V280", "#b0b0b0", 4)}
  ${P("M1192 184V220M1236 184V220", CY, 5)}${P("M1180 240V282M1212 240V282", "#d1c3dc", 4)}${R(1293, 196, 22, 16, "#9fe3f3")}${R(1176, 274, 6, 8, "#d6474f")}${R(1202, 274, 9, 8, "#d6474f")}
  ${R(1150, 238, 140, 5, "#e6dfca")}${P("M1320 230l22-24h40", TAN, 4)}${P("M1615 166H1678V296M1618 190H1678", "#c4c4c4", 4)}
  ${hatch(1618, 168, 56, 130)}${R(1626, 198, 18, 34, TAN)}${P("M1616 182V282", "#e9a4e8", 4, "6 3")}${P("M355 238h40M355 246h42v36", "#8fdcea", 8)}
  ${title(851, 334, 78)}

  ${section(-8, 461, 363, { end: 7, cranes: true, firm: true })}
  ${P("M133 532V604", "#2c4d53", 5)}${P("M895 600V642", "#2c4d53", 4)}${P("M1612 532V560", "#2c4d53", 4)}${P("M1611 560V620", "#8fd8f5", 5)}
  ${hatch(1616, 530, 62, 118)}${P("M1616 532H1680M1616 646H1680", "#c9c9c9", 3)}
  ${P("M1271 590V644M1279 590V644", "#8fa7c9", 4)}${R(1280, 600, 24, 8, TAN)}
  ${title(842, 697, 75)}

  ${hatch(1140, 834, 538, 118)}${P("M1138 834H1680M1138 952H1680", "#cfcfcf", 3)}
  ${section(-11, 765, 667, { end: 5, firm: true })}
  ${bubble(113, 765, true)}${P("M115 790V1010", YL, 5)}${P("M130 836H1138", "#355454", 4)}
  ${P("M1138 836V862", "#2c4d53", 4)}${P("M1137 862V900", "#8fd8f5", 5)}${P("M129 850V948", "#f29cf0", 4, "4 8")}
  ${P("M196 950V914H262V950M332 914H386V950M902 914H938V948", "#f3f09a", 4)}
  ${P("M602 876H646M612 876V948M630 910V948M604 912H646", "#6f7678", 4)}${P("M545 896l40 8 60-38h60M560 940l50-28", TAN, 4)}
  ${P("M1140 838h100M1160 856h90", "#cdd9fb", 4)}${R(1515, 880, 22, 14, TAN)}${R(1528, 888, 26, 8, TAN)}
  ${P("M222 886H345M490 868H545", TAN, 3)}
  ${title(492, 1000, 75)}

  ${R(132, 1059, 54, 15, TAN)}
  ${[[1110, 168, 1098, 228], [1152, 168, 1140, 249], [1194, 168, 1179, 147], [1235, 168, 1215, 237], [1287, 162, 1263, 114]].map(([cy, x, y, w]) => svg`
    <ellipse cx="142" cy=${cy} rx="17" ry="9" fill="#fff" stroke=${PB} stroke-width="4"></ellipse>${R(133, cy - 10, 15, 15, TAN)}${R(x, y, w, 15, TAN)}`)}
  ${R(168, 1233, 174, 15, TAN)}${R(162, 1275, 114, 10, TAN)}${R(162, 1281, 162, 15, TAN)}${R(162, 1296, 84, 18, TAN)}`;

@customElement("drawing-canvas")
export class DrawingCanvas extends LitElement {
  static styles = css`
    :host { display: block; position: relative; overflow: hidden; background: #8c8c8c; }
    .paper { position: absolute; top: 0; bottom: 0; left: 69px; right: 237px; background: #fff; box-shadow: 0 0 6px 1px #666; }
    .margin { position: absolute; top: 0; bottom: 0; left: 9px; right: 8px; }
    .margin::before, .margin::after { content: ""; position: absolute; top: 0; bottom: 0; width: 1px; background: repeating-linear-gradient(#9a9a9a 0 5px, transparent 5px 8px); }
    .margin::before { left: 0; }
    .margin::after { right: 0; }
    .sheet { position: absolute; top: 200px; width: 660px; height: 460px; }
    .first { left: 250px; }
    .second { left: 940px; }
    .ucs { position: absolute; left: 10px; bottom: 10px; width: 72px; height: 120px; }
    .vline { position: absolute; left: 1611px; top: 86px; bottom: 0; width: 1px; background: #222; }
    .hline { position: absolute; left: 987px; right: 0; top: 710px; height: 1px; background: #222; }
    .pick { position: absolute; left: 1598px; top: 697px; width: 25px; height: 25px; border: 1px solid #222; background: #fff; }
    .lg { font-family: "Liberation Sans", Arial, sans-serif; font-weight: 700; text-anchor: middle; }
    .red { font-size: 44px; fill: #cc0f22; stroke: #cc0f22; stroke-width: 4; }
    .beko { font-size: 49px; fill: #0e86c8; stroke: #0e86c8; stroke-width: 2; }
    .shaker { font-size: 41px; fill: #1683c6; stroke: #1683c6; stroke-width: 1; }
    .sub { font-size: 15px; font-weight: 400; fill: #a5a5a5; }
    .how { font-size: 34px; fill: #e9a3ab; stroke: #e9a3ab; stroke-width: 3; }
    .ar { font-family: "DejaVu Sans", sans-serif; font-size: 14px; fill: #e9a3ab; }
  `;

  private defs() {
    const bars: [number, number, string][] = [[0, 5, "#438047"], [8, 4, "#5c9460"], [14, 5, "#3f7e43"], [22, 5, "#4b884f"], [31, 3, "#73a576"], [35, 5, "#3f7e43"], [43, 4, "#568f5a"], [50, 5, "#438047"], [58, 5, "#4b884f"], [66, 3, "#81ae83"], [71, 5, "#3f7e43"]];
    return svg`<defs>
      <pattern id="siding" width="79" height="100" patternUnits="userSpaceOnUse">
        ${R(0, 0, 79, 100, "#9cc09e")}${bars.map(([x, w, c]) => R(x, 0, w, 100, c))}${[12, 27, 47, 63].map((x) => R(x, 0, 3, 100, "#e6ece6"))}
      </pattern>
      <pattern id="gray" width="14" height="100" patternUnits="userSpaceOnUse">
        ${R(0, 0, 14, 100, "#dcdcdc")}${R(0, 0, 4, 100, "#c6c6c6")}${R(9, 0, 3, 100, "#f0f0f0")}
      </pattern>
      <pattern id="pale" width="9" height="100" patternUnits="userSpaceOnUse">
        ${R(0, 0, 9, 100, "#cfdccf")}${R(0, 0, 4, 100, "#b1c6b2")}
      </pattern>
      <pattern id="hatch" width="50" height="50" patternUnits="userSpaceOnUse">
        <path d="M-5 55L55 -5M-5 5L5 -5M45 55L55 45" stroke="#c6c6c6" stroke-width="3"></path>
        <path d="M-5 30L30 -5M20 55L55 20" stroke="#cccccc" stroke-width="3" stroke-dasharray="14 6"></path>
      </pattern>
    </defs>`;
  }

  render() {
    return html`
      <div class="paper"><div class="margin"></div></div>
      <svg class="sheet first" viewBox="0 0 1980 1380" role="img" aria-label="Elevations sheet">${this.defs()}${elevations()}</svg>
      <svg class="sheet second" viewBox="0 0 1980 1380" role="img" aria-label="Sections sheet">${this.defs()}${sections()}</svg>
      <svg class="ucs" viewBox="0 0 72 120" aria-hidden="true">
        <path d="M5.500 6.500V114.500H67.500zM5.500 106.500H14.500V114.500M7 35l7.500 8 6.500-8M14.500 43v8M42 98l15 16M57 98l-15 16" fill="none" stroke="#1b4fe0" stroke-width="1.500"></path>
      </svg>
      <div class="vline"></div>
      <div class="hline"></div>
      <div class="pick"></div>`;
  }
}

type Tool = string | { sel: string; kind: string; label: string };
const MENUS = ["File", "Edit", "View", "Insert", "Format", "Tools", "Draw", "Dimension", "Modify", "Parametric", "Window", "Help", "Express"];
const FILE_TABS = ["Start", "04 3D", "02*", "Dr Mostafa El Demary(1)_recover*", "A1-FRAME-XREF*", "(B08) MODIFIED_MAINTENANCE BUILDING*"];
const LAYOUT_TABS = ["Model", "B01- GROUND...RT 3&4&5&6", "B01- MEZZANI...R PART 1 & 2", "B01- ROOF FLOOR"];
const ROW_ONE: Tool[][] = [
  ["props", { sel: "A-COL.-CNC.", kind: "layer", label: "Layer" }, "laycur", "layprev", "laystate"],
  ["dlinear", "daligned", "darc", "dord", "|", "drad", "djog", "ddia", "dang", "|", "dquick", "dbase", "dcont", "dspace", "dbreak", "|", "dtol", "dcenter", "dinspect", "djogline", "|", "dedit", "dtedit", "dupdate", "|", { sel: "HC-200-IN", kind: "style", label: "Dimension style" }, "dstyle"],
  ["front", "back", "above", "under", "|", "abc", "hatchback"],
  ["laymatch", "laycheck", "laydown", "layup", "laywalk", "layiso", "|", "layfreeze", "layoff", "laylock", "layunlock"],
];
const ROW_TWO: Tool[][] = [
  ["xedit", "|", { sel: "", kind: "block", label: "Reference name" }, "|", "wsadd", "wsdel", "wsdisc", "wssave"],
  [{ sel: "ByLayer", kind: "color", label: "Colour" }, "|", { sel: "ByLayer", kind: "ltype", label: "Linetype" }, "|", { sel: "ByLayer", kind: "lweight", label: "Lineweight" }, "|", { sel: "ByColor", kind: "plot", label: "Plot style" }],
  ["insert", "|", "attach", "xclip", "dwf", "dgn", "pdf", "image", "|", "import", "|", "datalink"],
  ["mleader", "mladd", "mldel", "|", "mlalign", "mlcollect", "|", { sel: "Standard", kind: "style", label: "Multileader style" }, "mlstyle"],
];

@customElement("app-root")
export class AppRoot extends LitElement {
  static styles = css`
    :host { display: block; --dark: #222831; --mid: #3b4454; color: #f2f3f4; font: 14px/20px "Open Sans", "Noto Sans", sans-serif; }
    * { box-sizing: border-box; }
    button, input, select { font: inherit; color: inherit; border: 0; background: none; padding: 0; margin: 0; border-radius: 0; }
    button { display: flex; align-items: center; justify-content: center; flex: none; white-space: nowrap; }
    a { color: inherit; text-decoration: none; }
    .app { display: grid; grid-template-rows: auto auto auto auto 1fr auto auto; height: 100vh; background: #000; position: relative; }
    .ic { width: 20px; height: 20px; display: block; overflow: visible; flex: none; }
    .sm { width: 16px; height: 16px; display: block; flex: none; }
    .arrow { width: 9px; height: 6px; display: block; flex: none; color: #dcdee0; }
    .chev { width: 11px; height: 7px; flex: none; overflow: visible; pointer-events: none; color: #333; }
    .bar { display: flex; align-items: center; background: var(--dark); min-width: 0; }
    .burger { margin: 0 13px 0 20px; }

    .titlebar { height: 34px; }
    .logo { width: 30px; height: 28px; margin: 0 0 0 19px; background: #e51050; border-left: 5px solid #c03048; border-bottom: 4px solid #8c1230; font-weight: 700; font-size: 19px; color: #fff; }
    .drop { width: 15px; height: 26px; }
    .drop.wide { width: 20px; }
    .tool { width: 30px; height: 26px; }
    .workspace { display: flex; align-items: center; gap: 2px; width: 223px; height: 26px; margin: 0 3px 0 2px; padding: 0 3px; background: var(--mid); }
    .workspace select { flex: 1; min-width: 0; appearance: none; }
    .share { gap: 6px; color: #9fd3fb; margin: 2px 27px 0 8px; }
    .title { display: flex; gap: 12px; white-space: nowrap; font-size: 15px; }
    .push { margin-left: auto; }
    .keyword { width: 223px; height: 26px; margin-left: 6px; padding: 0 4px; background: #4a5263; font-style: italic; outline: 0; }
    .keyword::placeholder { color: #c3c6cc; opacity: 1; }
    .signin { gap: 7px; margin-left: 5px; }
    .gap { width: 60px; }
    .rule { width: 1px; height: 22px; background: #555c68; margin: 0 6px 0 8px; }
    .win { width: 58px; height: 30px; }
    .wins { display: flex; margin-left: 77px; }

    .menubar { height: 27px; padding: 3px 0 0 15px; gap: 27px; color: #b9bcc1; border-bottom: 1px solid #454c58; }
    .menubar .wins { gap: 0; margin-left: auto; }
    .menubar .win { width: 41px; height: 24px; }

    .tabs { height: 32px; padding-top: 2px; }
    .slash { width: 9px; height: 20px; flex: none; display: block; }
    .slash path { stroke: #59606c; stroke-width: 1.500; fill: none; }
    .tab { height: 30px; padding: 0 11px; }
    .tab.closable { padding-right: 27px; }
    .tab.on { font-weight: 700; font-size: 15px; gap: 10px; padding: 0 14px 0 22px; background: var(--mid); color: #fff; clip-path: polygon(12px 0, 100% 0, calc(100% - 11px) 100%, 0 100%); }
    .tab.on .ic { width: 11px; height: 11px; }
    .plusbtn { margin: 0 12px; }

    .tools { background: var(--mid); padding: 5px 0 4px; display: grid; gap: 3px; }
    .toolrow { display: flex; gap: 2px; }
    .panel { display: flex; align-items: center; height: 30px; border: 1px solid #252b35; padding-bottom: 2px; }
    .panel:first-child { border-left: 0; padding-left: 2px; }
    .grip { width: 4px; height: 20px; margin: 0 2px 0 3px; background: radial-gradient(circle at 1px 1px, #aeb3ba 1px, transparent 1px) 0 0 / 3px 3px; flex: none; }
    .tb { width: 29px; height: 26px; }
    .sep { width: 6px; height: 26px; flex: none; display: flex; justify-content: center; }
    .sep::before { content: ""; width: 2px; background: #6f7782; border-right: 1px solid #222831; }
    .field { display: flex; align-items: center; gap: 4px; height: 26px; background: #fff; color: #111; flex: none; padding: 0 5px; border: 1px solid #c9ccd0; }
    .field select { flex: 1; min-width: 0; height: 100%; appearance: none; outline: 0; opacity: 1; }
    .layer { width: 375px; gap: 6px; }
    .style { width: 149px; padding-left: 22px; font-size: 15px; }
    .block { width: 175px; background: #efefef; border: 2px solid #8a8a8a; border-right-color: #fff; border-bottom-color: #fff; }
    .color { width: 188px; }
    .ltype { width: 200px; }
    .lweight { width: 156px; }
    .plot { width: 149px; padding-left: 12px; color: #7b7b7b; }
    .plot .chev { color: #aaa; }
    .swatch { width: 17px; height: 17px; background: #ff00ff; border: 1px solid #555; flex: none; }
    .line { height: 1px; background: #000; flex: none; }
    .ltype .line { width: 78px; }
    .lweight .line { width: 46px; }

    .canvas { min-height: 0; }

    .command { display: grid; grid-template-columns: 31px 1fr; background: #222831; border-top: 5px solid var(--mid); border-bottom: 5px solid var(--mid); font-family: "Liberation Mono", monospace; font-size: 15px; }
    .side { display: flex; flex-direction: column; align-items: center; gap: 7px; padding: 6px 2px 0 0; background: #2a303c; }
    .dots { width: 22px; height: 6px; background: radial-gradient(circle at 1px 1px, #dcdee0 1px, transparent 1px) 0 0 / 4px 4px; }
    .side .ic { width: 18px; height: 18px; margin-top: 6px; }
    .side .sm { width: 14px; height: 14px; }
    .log { margin-top: 1px; background: #c8c8c8; color: #111; height: 47px; padding: 9px 3px 0; line-height: 19px; white-space: pre; }
    .entry { display: flex; align-items: center; gap: 3px; margin: 1px 1px 1px 0; height: 25px; background: #fff; padding-left: 5px; border-bottom: 1px solid #c5cdc5; color: #999; }
    .entry .arrow { color: #aaa; }
    .entry input { flex: 1; font-style: italic; color: #333; outline: 0; margin-left: 5px; padding-top: 3px; }
    .entry input::placeholder { color: #6d756d; opacity: 1; }

    .status { height: 38px; border-bottom: 2px solid #000; align-items: flex-start; }
    .status .tab { padding: 0 13px 0 12px; }
    .status .tab.on { padding: 0 22px; }
    .status .slash, .status .burger, .status .plusbtn { margin-top: 5px; }
    .groups { display: flex; gap: 3px; margin: 2px 0 0 auto; padding-right: 2px; }
    .group { display: flex; align-items: center; height: 30px; background: var(--mid); gap: 1px; }
    .group .tb { height: 28px; width: 30px; }
    .group .active { background: #5f92c5; width: 28px; }
    .group .drop { width: 20px; }
    .paperbtn { width: 52px; font-size: 15px; }
    .group.wide .tb { width: 33px; }

    .mark { position: absolute; left: 50%; bottom: 22px; width: 240px; margin-left: -120px; text-align: center; color: #b3b6b8; opacity: .5; pointer-events: none; }
    .mark .word { font: 700 66px/70px "DejaVu Sans", sans-serif; display: block; height: 70px; opacity: .7; }
    .mark .site { font: 700 37px/40px "Liberation Sans", Arial, sans-serif; display: block; }
  `;

  private slash = html`<svg class="slash" viewBox="0 0 9 20" aria-hidden="true"><path d="M8.500 0L.5 20"></path></svg>`;

  private field(t: { sel: string; kind: string; label: string }) {
    if (t.kind === "block") return html`<input class="field block" aria-label=${t.label} readonly />`;
    return html`<label class="field ${t.kind}">
      ${t.kind === "layer" ? html`${["bulb", "sun", "vpfreeze", "unlock"].map((n) => icon(n, n === "bulb" || n === "sun" ? "sm" : "ic"))}` : ""}
      ${t.kind === "layer" || t.kind === "color" ? html`<span class="swatch"></span>` : ""}
      ${t.kind === "ltype" || t.kind === "lweight" ? html`<span class="line"></span>` : ""}
      <select aria-label=${t.label} ?disabled=${t.kind === "plot"}><option>${t.sel}</option></select>${chevron}
    </label>`;
  }

  private panel(items: Tool[]) {
    return html`<div class="panel" role="toolbar"><span class="grip"></span>${items.map((t) =>
      typeof t !== "string" ? this.field(t) : t === "|" ? html`<span class="sep"></span>` : html`<button class="tb" aria-label=${t}>${icon(t)}</button>`)}</div>`;
  }

  private sb(name: string, active = false) {
    return html`<button class="tb ${active ? "active" : ""}" aria-label=${name}>${icon(name)}</button>`;
  }

  private drop = html`<button class="drop" aria-label="More">${arrow}</button>`;

  render() {
    const winButtons = ["min", "restore", "x"].map((n) => html`<button class="win" aria-label=${n}>${icon(n, "sm")}</button>`);
    return html`<div class="app">
      <header class="bar titlebar">
        <button class="logo" aria-label="Application menu">A</button>
        <button class="drop wide" aria-label="More">${arrow}</button>
        ${["new", "open", "save", "saveas", "openweb", "saveweb", "print", "undo"].map((n) => html`<button class="tool" aria-label=${n}>${icon(n)}</button>`)}
        ${this.drop}<button class="tool" aria-label="redo">${icon("redo")}</button>${this.drop}
        <label class="workspace">${icon("gear")}<select aria-label="Workspace"><option>STARTREE 12 2024</option></select>${arrow}</label>
        <button class="drop" aria-label="Customize">${arrow}</button>
        <button class="share">${icon("share")}Share</button>
        <div class="title"><span>Autodesk AutoCAD 2024</span><span>B01-PLANS ,ELEVS&amp; SECS.dwg</span></div>
        <svg class="push" width="5" height="10" viewBox="0 0 5 10" aria-hidden="true"><path d="M0 0l5 5-5 5z" fill="#dcdee0"></path></svg>
        <input class="keyword" placeholder="Type a keyword or phrase" aria-label="Search" />
        <button class="tool" aria-label="Search">${icon("search")}</button>
        <button class="signin">${icon("user")}Sign In</button>
        <span class="gap"></span>${this.drop}
        <button class="tool" aria-label="Store">${icon("cart", "sm")}</button>
        <button class="tool" aria-label="Apps">${icon("apps")}</button>${this.drop}
        <span class="rule"></span>
        <button class="tool" aria-label="Help">${icon("help")}</button>${this.drop}
        <div class="wins">${winButtons}</div>
      </header>
      <nav class="bar menubar">${MENUS.map((m) => html`<a href="#">${m}</a>`)}<div class="wins">${winButtons}</div></nav>
      <nav class="bar tabs">
        <button class="burger" aria-label="Drawings">${icon("menu")}</button>
        ${FILE_TABS.map((t, i) => html`${this.slash}<button class="tab ${i ? "closable" : ""}">${t}</button>`)}
        <button class="tab on">B01-PLANS ,ELEVS&amp; SECS*${icon("close")}</button>
        <button class="tab closable">A1-FRAME-XREF*</button>${this.slash}
        <button class="plusbtn" aria-label="New tab">${icon("plus")}</button>${this.slash}
      </nav>
      <section class="tools">
        <div class="toolrow">${ROW_ONE.map((p) => this.panel(p))}</div>
        <div class="toolrow">${ROW_TWO.map((p) => this.panel(p))}</div>
      </section>
      <drawing-canvas class="canvas"></drawing-canvas>
      <section class="command">
        <div class="side"><span class="dots"></span>${icon("close", "sm")}${icon("wrench")}</div>
        <div>
          <div class="log">Command:
Command: *Cancel*</div>
          <label class="entry">${icon("prompt")}${arrow}<input placeholder="Type a command" aria-label="Command line" /></label>
        </div>
      </section>
      <footer class="bar status">
        <button class="burger" aria-label="Layouts">${icon("menu")}</button>
        ${LAYOUT_TABS.map((t) => html`${this.slash}<button class="tab">${t}</button>`)}
        <button class="tab on">B01-ELEVATION &amp; SECTIONS</button>
        <button class="plusbtn" aria-label="New layout">${icon("plus")}</button>${this.slash}
        <div class="groups">
          <div class="group"><button class="paperbtn">PAPER</button></div>
          <div class="group">${this.sb("ortho", true)}${this.sb("polar")}${this.drop}${this.sb("iso")}${this.drop}${this.sb("otrack", true)}${this.sb("osnap", true)}${this.drop}</div>
          <div class="group">${this.sb("annomon")}${this.sb("annovis")}${this.sb("annoauto")}</div>
          <div class="group">${this.sb("gear")}${this.drop}${this.sb("cross")}</div>
          <div class="group">${this.sb("shapes")}</div>
          <div class="group wide">${this.sb("hwaccel")}${this.sb("xref")}${this.sb("notify")}${this.sb("isolate")}</div>
          <div class="group">${this.sb("clean")}</div>
          <div class="group">${this.sb("menu")}</div>
        </div>
      </footer>
      <div class="mark"><span class="word">مستقل</span><span class="site">mostaql.com</span></div>
    </div>`;
  }
}
